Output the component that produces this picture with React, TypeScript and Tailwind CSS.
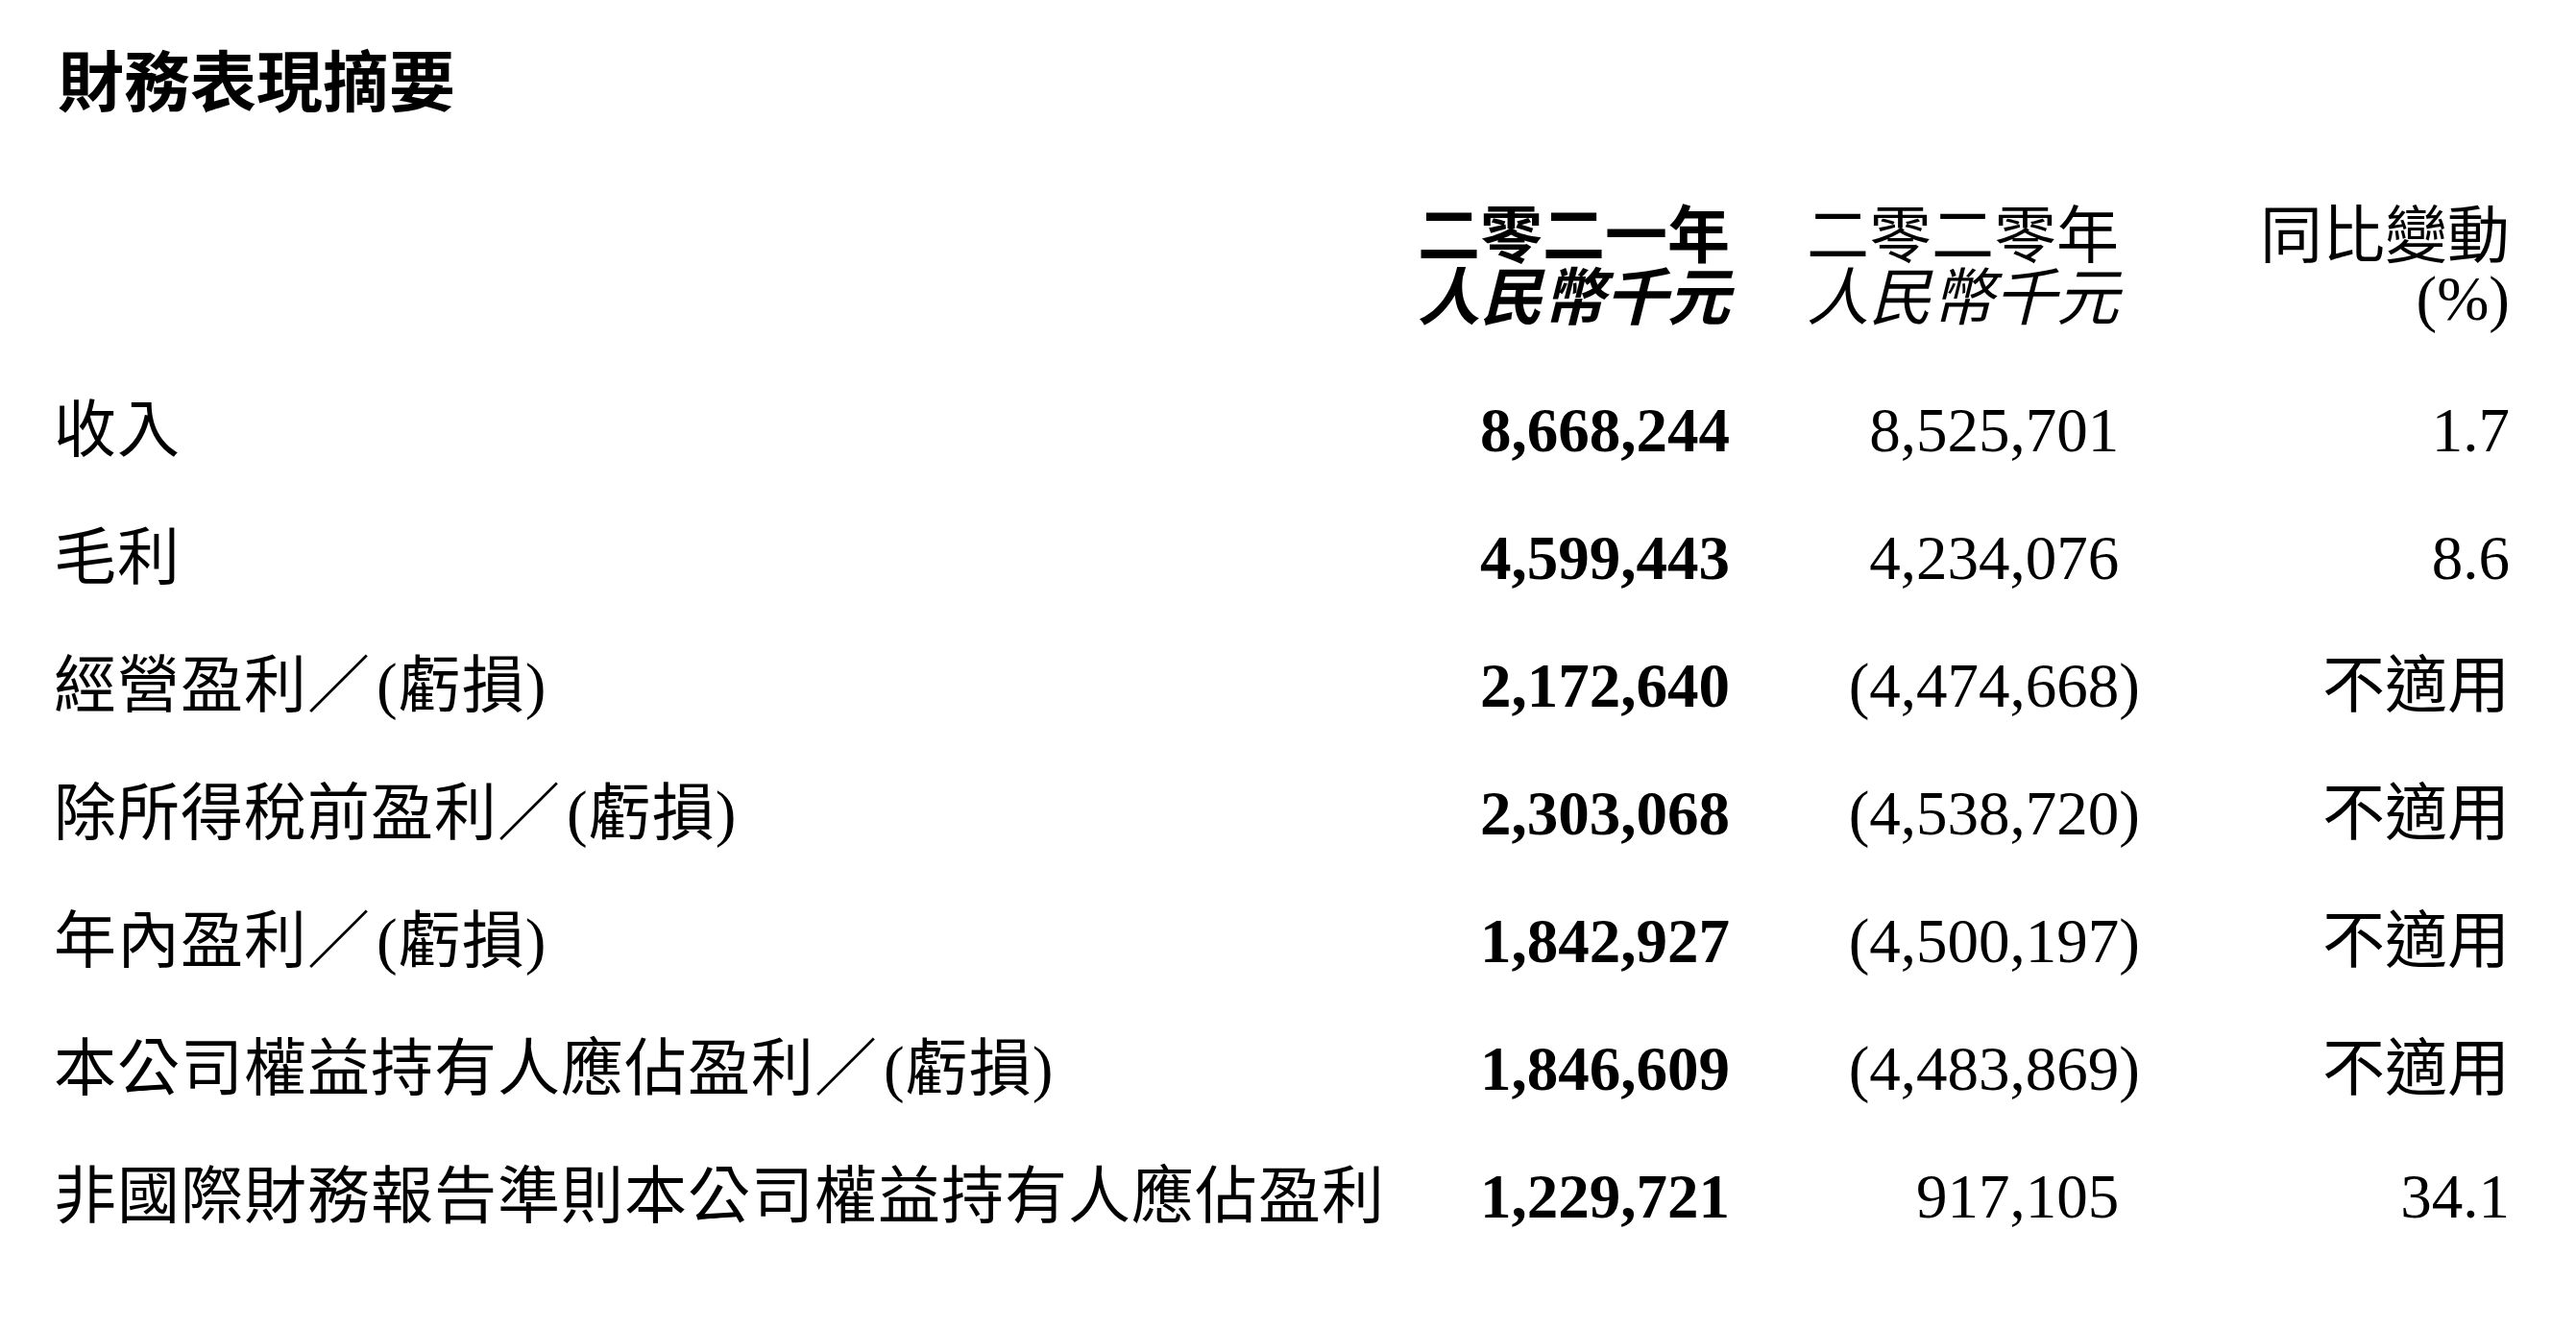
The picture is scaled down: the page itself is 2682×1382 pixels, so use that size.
const rows: [string, string, string, string][] = [
  ["收入", "8,668,244", "8,525,701", "1.7"],
  ["毛利", "4,599,443", "4,234,076", "8.6"],
  ["經營盈利／(虧損)", "2,172,640", "(4,474,668)", "不適用"],
  ["除所得稅前盈利／(虧損)", "2,303,068", "(4,538,720)", "不適用"],
  ["年內盈利／(虧損)", "1,842,927", "(4,500,197)", "不適用"],
  ["本公司權益持有人應佔盈利／(虧損)", "1,846,609", "(4,483,869)", "不適用"],
  ["非國際財務報告準則本公司權益持有人應佔盈利", "1,229,721", "917,105", "34.1"],
]

function Prior({ value }: { value: string }) {
  // closing bracket hangs past the column edge, so pad plain numbers
  if (value.startsWith("(")) return <span>{value}</span>
  return (
    <span>
      {value}
      <span className="invisible">)</span>
    </span>
  )
}

function Label({ text }: { text: string }) {
  const i = text.indexOf("(")
  if (i < 0) return <>{text}</>
  return (
    <>
      {text.slice(0, i)}
      <span className="pl-[6px]">{text.slice(i)}</span>
    </>
  )
}

export default function App() {
  return (
    <div className="min-h-screen bg-white text-black font-['Liberation_Serif','Noto_Sans_CJK_TC',serif] pl-[56px] pr-[69px] pt-[48px]">
      <h1 className="text-[69px] leading-[80px] font-bold pl-[4px]">財務表現摘要</h1>

      <div className="mt-[86px] grid grid-cols-[1fr_341px_427px_385px] text-[65px] leading-[65px]">
        <div />
        <div className="text-right font-bold">
          <div>二零二一年</div>
          <div className="italic">人民幣千元</div>
        </div>
        <div className="text-right pr-[22px]">
          <div>二零二零年</div>
          <div className="italic">人民幣千元</div>
        </div>
        <div className="text-right">
          <div>同比變動</div>
          <div>(%)</div>
        </div>
      </div>

      <div className="mt-[38px] grid grid-cols-[1fr_341px_427px_385px] text-[65px] leading-[133px]">
        {rows.map(([label, cur, prev, change]) => (
          <div key={label} className="contents">
            <div className="whitespace-nowrap tracking-[1px]">
              <Label text={label} />
            </div>
            <div className="text-right font-bold">{cur}</div>
            <div className="text-right">
              <Prior value={prev} />
            </div>
            <div className="text-right">{change}</div>
          </div>
        ))}
      </div>
    </div>
  )
}
